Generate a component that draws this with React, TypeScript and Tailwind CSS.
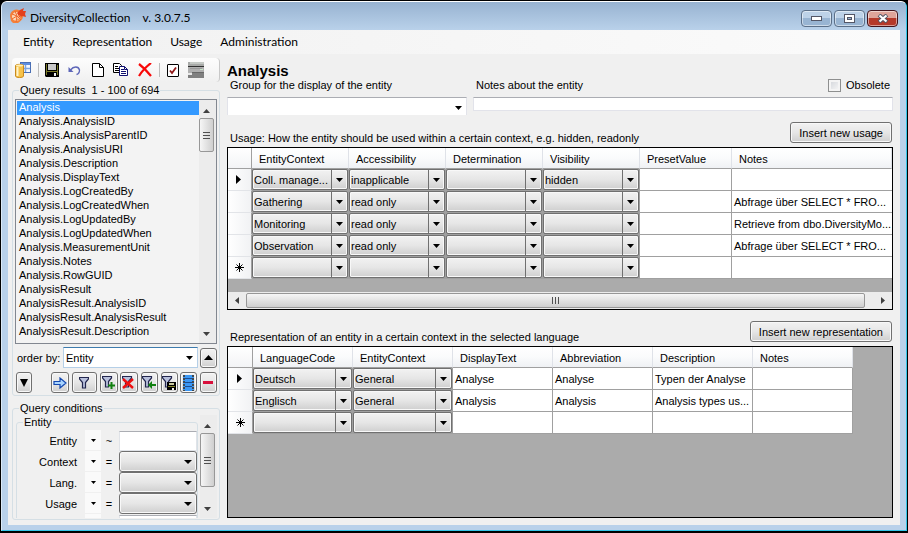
import type { ReactNode } from "react";

const ENTITIES = [
  "Analysis",
  "Analysis.AnalysisID",
  "Analysis.AnalysisParentID",
  "Analysis.AnalysisURI",
  "Analysis.Description",
  "Analysis.DisplayText",
  "Analysis.LogCreatedBy",
  "Analysis.LogCreatedWhen",
  "Analysis.LogUpdatedBy",
  "Analysis.LogUpdatedWhen",
  "Analysis.MeasurementUnit",
  "Analysis.Notes",
  "Analysis.RowGUID",
  "AnalysisResult",
  "AnalysisResult.AnalysisID",
  "AnalysisResult.AnalysisResult",
  "AnalysisResult.Description",
];

const USAGE_COLUMNS = ["EntityContext", "Accessibility", "Determination", "Visibility", "PresetValue", "Notes"];
const USAGE_ROWS = [
  ["Coll. manage...", "inapplicable", "", "hidden", "", ""],
  ["Gathering", "read only", "", "", "", "Abfrage über SELECT * FRO..."],
  ["Monitoring", "read only", "", "", "", "Retrieve from dbo.DiversityMo..."],
  ["Observation", "read only", "", "", "", "Abfrage über SELECT * FRO..."],
  ["", "", "", "", "", ""],
];

const REPRESENTATION_COLUMNS = ["LanguageCode", "EntityContext", "DisplayText", "Abbreviation", "Description", "Notes"];
const REPRESENTATION_ROWS = [
  ["Deutsch", "General", "Analyse", "Analyse", "Typen der Analyse", ""],
  ["Englisch", "General", "Analysis", "Analysis", "Analysis types us...", ""],
  ["", "", "", "", "", ""],
];

const CHROME = "border border-[#707070] bg-linear-to-b from-[#f2f2f2] via-[#e6e6e6] to-[#cfcfcf] shadow-[inset_0_0_0_1px_#f8f8f8]";

function Svg({ w = 16, h = 16, children }: { w?: number; h?: number; children: ReactNode }) {
  return (
    <svg width={w} height={h} viewBox={`0 0 ${w} ${h}`} aria-hidden="true" className="block shrink-0">
      {children}
    </svg>
  );
}

function Down() {
  return (
    <Svg w={7} h={4}>
      <path d="M0 0h7L3.5 4z" />
    </Svg>
  );
}

function AppLogo() {
  return (
    <Svg w={18} h={16}>
      <path d="M1 8a6.500 6.500 0 1 1 10 5.500L9 15H4l-2-2z" fill="#f4803a" />
      <path d="M3 9a4.500 4.500 0 0 1 9-1 4 4 0 0 1-4 4.500A4 4 0 0 1 3 9z" fill="#fbd9b8" />
      <path d="M8 8 3 6M8 8 6 3M8 8l-5 3M8 8l-1 6M8 8l4 4" stroke="#f0682c" strokeWidth="1" />
      <path d="M8 5l3-3 4-2-1 3h3l-1 3 1 3-4-1-2 2z" fill="#e3401c" />
      <path d="M9 8a2 2 0 0 1 3 1c0 2-3 3-4 2" fill="none" stroke="#f4803a" />
    </Svg>
  );
}

function DatabaseTableIcon() {
  return (
    <Svg>
      <rect x="5.500" y="0.500" width="10" height="10" fill="#f4f8ff" stroke="#4a6fb4" />
      <path d="M6 1h9v2H6z" fill="#5b8de0" />
      <path d="M6 6.500h9M10.500 3v7" stroke="#7ea4de" strokeWidth="1.500" />
      <path d="M0.500 3.500c0-1.500 8-1.500 8 0v10.500c0 2-8 2-8 0z" fill="#f6c24a" stroke="#c98a1c" />
      <ellipse cx="4.500" cy="3.500" rx="3.500" ry="1" fill="#fff0b8" />
      <path d="M2.500 5v9" stroke="#fff3c8" strokeWidth="2" />
    </Svg>
  );
}

function DisketteIcon() {
  return (
    <Svg w={14} h={14}>
      <path d="M0 0h14v14H1l-1-1z" />
      <path d="M1 1h1v11H1zM12 2h1v10h-1z" fill="#7b7b2a" />
      <path d="M3 1h8v6H3z" fill="#c9c9c9" />
      <path d="M1 8h12v1H1z" fill="#7b7b2a" />
      <path d="M9 10h2v3H9z" fill="#f0f0f0" />
    </Svg>
  );
}

function UndoIcon() {
  return (
    <Svg w={15} h={12}>
      <path d="M0.500 3v5h5z" fill="#5d66b8" />
      <path d="M2.500 6c3-4 8-4 9 0 0 2-1 4-3 4.500" fill="none" stroke="#5d66b8" strokeWidth="1.300" />
    </Svg>
  );
}

function PageIcon() {
  return (
    <Svg w={12} h={14}>
      <path d="M0.500 0.500h7l4 4v9h-11z" fill="#fff" stroke="#000" />
      <path d="M7.500 0.500v4h4" fill="none" stroke="#000" />
    </Svg>
  );
}

function CopyIcon() {
  return (
    <Svg w={16} h={14}>
      <path d="M0.500 0.500h6l2 2v7h-8z" fill="#fff" stroke="#000" />
      <path d="M2 3.500h3M2 5.500h4M2 7.500h4" stroke="#000" />
      <path d="M6.500 3.500h5l3 3v6h-8z" fill="#fff" stroke="#101070" />
      <path d="M8 6.500h3M8 8.500h5M8 10.500h5" stroke="#101070" />
      <path d="M11.500 3.500v3h3" fill="none" stroke="#101070" />
    </Svg>
  );
}

function DeleteIcon() {
  return (
    <Svg w={14} h={14}>
      <path d="M1 1c4 3 8 7 12 12M13 0C8 4 4 8 1 13" fill="none" stroke="#f80808" strokeWidth="2.200" />
    </Svg>
  );
}

function CheckIcon() {
  return (
    <Svg w={12} h={13}>
      <rect x="0.500" y="0.500" width="11" height="12" rx="0.500" fill="#fff" stroke="#000" />
      <path d="M3 6.500l2 2.500 4-5.500" fill="none" stroke="#901818" strokeWidth="1.800" />
    </Svg>
  );
}

function PrinterIcon() {
  return (
    <Svg w={16} h={16}>
      <path d="M0 0h16v5H0z" fill="#a8aaa8" />
      <path d="M2 0h14v2H2z" fill="#c4c8c4" />
      <path d="M0 4h16v1H0z" fill="#303030" />
      <path d="M0 5h16v6H0z" fill="#b0b0b0" />
      <path d="M2 6h12v1H2z" fill="#989898" />
      <path d="M0 11h16v5H0z" fill="#808080" />
      <path d="M0 11h4v2H0z" fill="#e8e8e8" />
      <path d="M4 10h12v1H4z" fill="#686868" />
      <path d="M12 7h3v1h-3z" fill="#c4e4c8" />
    </Svg>
  );
}

function FunnelIcon({ mark }: { mark?: "plus" | "cross" | "back" | "save" }) {
  return (
    <Svg w={mark ? 14 : 10} h={14}>
      <g transform={mark ? "translate(0 0)" : "translate(0 1)"}>
        <path d="M0.500 0.500h9v1.500l-3 3.500v5.500h-3v-5.500l-3-3.500z" fill="#b8c0dc" stroke="#22264e" strokeWidth="1.200" />
      </g>
      {mark === "plus" && <path d="M6 9.500h7M9.500 6v7" stroke="#108010" strokeWidth="2" />}
      {mark === "cross" && <path d="M1 3l10 9M11 3L1 12" stroke="#ee1010" strokeWidth="2.400" />}
      {mark === "back" && (
        <>
          <path d="M6 9l4-4v8z" fill="#108010" />
          <path d="M9 9h5" stroke="#108010" strokeWidth="2" />
        </>
      )}
      {mark === "save" && (
        <>
          <path d="M5 6h9v8H5z" />
          <path d="M7 7h5v2H7z" fill="#c9c9a0" />
          <path d="M6 10h7v1H6z" fill="#84842a" />
          <path d="M10 12h2v2h-2z" fill="#f0f0f0" />
        </>
      )}
    </Svg>
  );
}

function ArrowIcon() {
  return (
    <Svg w={14} h={12}>
      <path d="M1 4.500h6V1l6 5-6 5V7.500H1z" fill="#a8d4ff" stroke="#1448b0" strokeWidth="1.200" />
    </Svg>
  );
}

function FilmIcon() {
  return (
    <Svg w={11} h={16}>
      <path d="M0 0h11v16H0z" fill="#3c98f4" />
      <path d="M1 0v16M10 0v16" stroke="#404850" strokeWidth="2" strokeDasharray="2 1" />
      <path d="M2 3.500h7M2 7.500h7M2 11.500h7" stroke="#1c4c90" />
    </Svg>
  );
}

function CaptionButton({ label, red, children }: { label: string; red?: boolean; children: ReactNode }) {
  return (
    <button
      type="button"
      aria-label={label}
      className={`flex h-[17px] w-[31px] items-center justify-center rounded-sm border shadow-[inset_0_0_0_1px_rgba(255,255,255,0.5)] ${
        red
          ? "border-[#43141c] bg-linear-to-b from-[#dfa49a] from-45% to-[#b5392a] to-50%"
          : "border-[#5b6f88] bg-linear-to-b from-[#bdd2e8] from-45% to-[#98b4d2] to-50%"
      }`}
    >
      {children}
    </button>
  );
}

function PushButton({ children, width = "px-2", height = "h-[21px]", label }: { children: ReactNode; width?: string; height?: string; label?: string }) {
  return (
    <button
      type="button"
      aria-label={label}
      className={`flex shrink-0 items-center justify-center rounded-[3px] whitespace-nowrap ${height} ${width} ${CHROME}`}
    >
      {children}
    </button>
  );
}

function Separator() {
  return <span className="h-[14px] w-px bg-[#bdbdbd]" />;
}

function VerticalScrollbar({ thumb, className }: { thumb: string; className: string }) {
  return (
    <div aria-hidden="true" className={`flex w-[17px] shrink-0 flex-col bg-[#ececec] ${className}`}>
      <span className="flex h-[18px] w-[15px] shrink-0 items-center justify-center pt-1">
        <Svg w={7} h={4}>
          <path d="M0 4h7L3.500 0z" fill="#404040" />
        </Svg>
      </span>
      <span
        className={`flex w-[15px] shrink-0 flex-col items-center justify-center gap-0.5 rounded-xs border border-[#979797] bg-linear-to-r from-[#f6f6f6] to-[#cfcfcf] ${thumb}`}
      >
        <span className="h-px w-[7px] bg-[#505050]" />
        <span className="h-px w-[7px] bg-[#505050]" />
        <span className="h-px w-[7px] bg-[#505050]" />
      </span>
      <span className="mt-auto flex h-[18px] w-[15px] items-center justify-center pb-px">
        <Svg w={7} h={4}>
          <path d="M0 0h7L3.500 4z" fill="#404040" />
        </Svg>
      </span>
    </div>
  );
}

function HorizontalScrollbar() {
  return (
    <div aria-hidden="true" className="flex h-[17px] items-center bg-[#ececec]">
      <span className="flex w-[18px] justify-center">
        <Svg w={4} h={7}>
          <path d="M4 0v7L0 3.500z" fill="#404040" />
        </Svg>
      </span>
      <span className="flex h-[15px] flex-1 items-center justify-center gap-0.5 rounded-xs border border-[#979797] bg-linear-to-b from-[#f6f6f6] to-[#cfcfcf]">
        <span className="h-[7px] w-px bg-[#505050]" />
        <span className="h-[7px] w-px bg-[#505050]" />
        <span className="h-[7px] w-px bg-[#505050]" />
      </span>
      <span className="flex w-[27px] justify-center pl-2">
        <Svg w={4} h={7}>
          <path d="M0 0v7l4-3.500z" fill="#404040" />
        </Svg>
      </span>
    </div>
  );
}

function CellSelect({ value, label }: { value: string; label: string }) {
  return (
    <div className="relative h-[21px] w-full">
      <select aria-label={label} className={`block h-[21px] w-full appearance-none rounded-xs pr-4 pl-px ${CHROME}`}>
        <option>{value}</option>
      </select>
      <span className="pointer-events-none absolute top-px right-px bottom-px flex w-4 items-center justify-center border-l border-[#707070]">
        <Down />
      </span>
    </div>
  );
}

function RowMarker({ kind }: { kind: "current" | "new" | "none" }) {
  if (kind === "none") return null;
  return (
    <span className="flex justify-center">
      {kind === "current" ? (
        <Svg w={9} h={9}>
          <path d="M1 0l5 4.500L1 9z" />
        </Svg>
      ) : (
        <Svg w={9} h={9}>
          <path d="M4.500 0v9M0 4.500h9M1.500 1.500l6 6M7.500 1.500l-6 6" stroke="#000" />
        </Svg>
      )}
    </span>
  );
}

function DataGrid({
  caption,
  columns,
  rows,
  selects,
  widths,
  marker,
  tableWidth,
  lastEdge,
}: {
  caption: string;
  columns: string[];
  rows: string[][];
  selects: number;
  widths: string[];
  marker: string;
  tableWidth: string;
  lastEdge: string;
}) {
  return (
    <table aria-label={caption} className={`table-fixed border-separate border-spacing-0 bg-white ${tableWidth}`}>
      <colgroup>
        <col className={marker} />
        {columns.map((c, i) => (
          <col key={c} className={widths[i]} />
        ))}
      </colgroup>
      <thead>
        <tr className="h-[21px]">
          <td className="border-r border-b border-[#a0a0a0] bg-linear-to-b from-white to-[#f3f4f6] p-0" />
          {columns.map((c) => (
            <th
              key={c}
              scope="col"
              className="border-r border-b border-r-[#dfe2e8] border-b-[#a0a0a0] bg-linear-to-b from-white via-[#fafbfc] to-[#eff1f4] p-0 pt-px pl-[7px] text-left font-normal"
            >
              {c}
            </th>
          ))}
        </tr>
      </thead>
      <tbody>
        {rows.map((row, r) => (
          <tr key={r} className="h-[22px]">
            <td className="border-r border-b border-r-[#a0a0a0] border-b-[#e2e4e8] bg-linear-to-r from-white to-[#f1f2f4] p-0">
              <RowMarker kind={r === 0 ? "current" : r === rows.length - 1 ? "new" : "none"} />
            </td>
            {row.map((value, c) => (
              <td
                key={c}
                className={`overflow-hidden border-b border-[#a0a0a0] p-0 whitespace-nowrap ${c < selects ? "bg-[#a0a0a0]" : "pl-0.5"} ${
                  c === row.length - 1 ? lastEdge : "border-r"
                }`}
              >
                {c < selects ? <CellSelect value={value} label={`${columns[c]} ${r + 1}`} /> : value}
              </td>
            ))}
          </tr>
        ))}
      </tbody>
    </table>
  );
}

function ConditionRow({ label, operator, text }: { label: string; operator: string; text?: boolean }) {
  const id = `condition-${label}`;
  return (
    <div className="flex h-[21px] items-center">
      <label htmlFor={id} className="w-[60px] text-right">
        {label}
      </label>
      <button type="button" aria-label={`${label} operator`} className="ml-2 flex h-[21px] w-4 items-center justify-center border-b border-[#f0f0f0] bg-[#fafafa]">
        <Svg w={5} h={3}>
          <path d="M0 0h5L2.500 3z" />
        </Svg>
      </button>
      <span className="w-4 text-center">{operator}</span>
      {text ? (
        <input id={id} className="ml-0.5 h-5 min-w-0 flex-1 border border-[#e0e3e8] border-t-[#abadb3] bg-white" />
      ) : (
        <span className="relative ml-0.5 flex h-[21px] min-w-0 flex-1 items-center">
          <select id={id} className={`h-[21px] w-full appearance-none rounded-[3px] ${CHROME}`} />
          <span className="pointer-events-none absolute right-[5px]">
            <Svg w={8} h={4}>
              <path d="M0 0h8L4 4z" />
            </Svg>
          </span>
        </span>
      )}
    </div>
  );
}

function SectionHead({ title, action }: { title: string; action: string }) {
  return (
    <div className="flex h-[25px] items-start justify-between">
      <h2 className="self-end pb-0.5 pl-[3px]">{title}</h2>
      <div className="pr-px">
        <PushButton>{action}</PushButton>
      </div>
    </div>
  );
}

export default function App() {
  return (
    <div className="h-screen bg-black px-px pt-px pb-0.5 font-['Liberation_Sans',Arial,sans-serif] text-[11px] leading-[14px] text-black">
      <div className="flex h-full flex-col rounded-t-md border border-t-white border-r-[#35c5e8] border-b-[#35c5e8] border-l-[#dceaf7] bg-[#b9d1ea] px-1.5 pb-[5px]">
        <header className="-mx-1.5 flex h-7 shrink-0 items-center rounded-t-[5px] bg-linear-to-b from-[#98b3d1] to-[#b9d1ea] pr-2 pl-[7px] font-[Lato,'Open_Sans',sans-serif] text-[12px]">
          <AppLogo />
          <h1 className="ml-[3px] pt-1 whitespace-pre">DiversityCollection{"    "}v. 3.0.7.5</h1>
          <div className="ml-auto flex gap-0.5 pt-1">
            <CaptionButton label="Minimize">
              <Svg w={11} h={5}>
                <rect x="0.500" y="0.500" width="10" height="4" fill="#fff" stroke="#535666" />
              </Svg>
            </CaptionButton>
            <CaptionButton label="Maximize">
              <Svg w={11} h={9}>
                <rect x="0.500" y="0.500" width="10" height="8" fill="#fff" stroke="#535666" />
                <rect x="3.500" y="3.500" width="4" height="2" fill="#98b4d2" stroke="#535666" />
              </Svg>
            </CaptionButton>
            <CaptionButton label="Close" red>
              <Svg w={12} h={9}>
                <path d="M2 1l8 7M10 1L2 8" stroke="#535666" strokeWidth="4" />
                <path d="M2.500 1.500l7 6M9.500 1.500l-7 6" stroke="#fff" strokeWidth="2.200" />
              </Svg>
            </CaptionButton>
          </div>
        </header>

        <nav className="flex h-6 shrink-0 items-center gap-[18px] bg-linear-to-r from-[#f1f1f1] to-[#fbfbfb] pl-[15px] font-[Lato,'Open_Sans',sans-serif] text-[12px]">
          <button type="button">Entity</button>
          <button type="button">Representation</button>
          <button type="button">Usage</button>
          <button type="button">Administration</button>
        </nav>

        <div className="flex min-h-0 flex-1 bg-[#f0f0f0]">
          <aside className="flex w-[212px] shrink-0 flex-col pt-1 pb-[5px] pl-1">
            <div className="flex h-6 shrink-0 items-center rounded-sm border-r border-[#c8c8c8] bg-linear-to-b from-[#fdfdfd] to-[#f0f0f0] pl-[3px]">
              <button type="button" aria-label="Table editor"><DatabaseTableIcon /></button>
              <span className="mr-1.5 ml-[7px] flex"><Separator /></span>
              <div className="flex items-center gap-[9px]">
                <button type="button" aria-label="Save"><DisketteIcon /></button>
                <button type="button" aria-label="Undo"><UndoIcon /></button>
                <button type="button" aria-label="New"><PageIcon /></button>
                <button type="button" aria-label="Copy"><CopyIcon /></button>
                <button type="button" aria-label="Delete"><DeleteIcon /></button>
              </div>
              <span className="mr-[7px] ml-[7px] flex"><Separator /></span>
              <div className="flex items-center gap-[9px]">
                <button type="button" aria-label="Select"><CheckIcon /></button>
                <button type="button" aria-label="Print"><PrinterIcon /></button>
              </div>
            </div>

            <fieldset className="mt-px min-w-0 shrink-0 rounded-[3px] border border-[#d5dfe5] px-0.5 pt-0.5 pb-px">
              <legend className="ml-1 px-px whitespace-pre">Query results{"  "}1 - 100 of 694</legend>
              <div className="flex border border-[#828790] bg-[#f3f3f3]">
                <select
                  size={17}
                  aria-label="Query results"
                  defaultValue="Analysis"
                  className="min-w-0 flex-1 overflow-hidden py-px pl-px [scrollbar-width:none]"
                >
                  {ENTITIES.map((e) => (
                    <option
                      key={e}
                      className="h-[14px] min-h-0 p-0 pl-0.5 leading-4 checked:bg-[linear-gradient(#3399ff,#3399ff)] checked:[-webkit-text-fill-color:white]"
                    >
                      {e}
                    </option>
                  ))}
                </select>
                <VerticalScrollbar thumb="h-[34px]" className="h-[243px]" />
              </div>
              <div className="mt-[3px] flex h-[21px] items-center">
                <label htmlFor="order" className="w-[48px] pl-0.5 whitespace-nowrap">order by:</label>
                <span className="relative flex flex-1 items-center">
                  <select id="order" className="h-[21px] w-full appearance-none border border-[#b5cfe7] border-t-[#3d7bad] bg-white pl-0.5">
                    <option>Entity</option>
                  </select>
                  <span className="pointer-events-none absolute right-[5px]"><Down /></span>
                </span>
                <span className="ml-0.5">
                  <PushButton width="w-[17px]" height="h-5" label="Ascending">
                    <Svg w={9} h={5}><path d="M0 5h9L4.500 0z" /></Svg>
                  </PushButton>
                </span>
              </div>
              <div className="mt-1 flex h-[22px] justify-between pl-px">
                <PushButton width="w-4" label="Show conditions"><Svg w={8} h={8}><path d="M0 0h8L4 8z" /></Svg></PushButton>
                <span className="w-3.5" />
                <PushButton width="w-[18px]" label="Next"><ArrowIcon /></PushButton>
                <PushButton width="w-[25px]" label="Query"><FunnelIcon /></PushButton>
                <PushButton width="w-[18px]" label="Add to query"><FunnelIcon mark="plus" /></PushButton>
                <PushButton width="w-[18px]" label="Clear query"><FunnelIcon mark="cross" /></PushButton>
                <PushButton width="w-[17px]" label="Previous query"><FunnelIcon mark="back" /></PushButton>
                <PushButton width="w-[17px]" label="Save query"><FunnelIcon mark="save" /></PushButton>
                <PushButton width="w-[17px]" label="Columns"><FilmIcon /></PushButton>
                <PushButton width="w-[17px]" label="Remove"><Svg w={10} h={3}><path d="M0 0h10v3H0z" fill="#d8103c" /></Svg></PushButton>
              </div>
            </fieldset>

            <fieldset className="mt-[5px] flex min-h-0 min-w-0 flex-1 flex-col rounded-[3px] border border-[#d5dfe5] pr-0.5 pb-px pl-[3px]">
              <legend className="ml-[3px] px-px">Query conditions</legend>
              <div className="flex min-h-0 flex-1 overflow-hidden">
                <div className="min-w-0 flex-1 overflow-hidden">
                  <fieldset className="min-w-0 rounded-[3px] border border-[#d5dfe5] pt-px">
                    <legend className="ml-[6px] px-px">Entity</legend>
                    <ConditionRow label="Entity" operator="~" text />
                    <ConditionRow label="Context" operator="=" />
                    <ConditionRow label="Lang." operator="=" />
                    <ConditionRow label="Usage" operator="=" />
                    <ConditionRow label="" operator="" text />
                  </fieldset>
                </div>
                <VerticalScrollbar thumb="h-[54px]" className="ml-0.5" />
              </div>
            </fieldset>
          </aside>

          <main className="flex min-w-0 flex-1 flex-col pt-2 pr-[7px] pb-[7px] pl-[7px]">
            <h2 className="h-4 text-[15px] leading-[18px] font-bold">Analysis</h2>
            <div className="flex gap-1.5">
              <div className="flex w-[240px] flex-col gap-[5px]">
                <label htmlFor="group" className="pl-[3px]">Group for the display of the entity</label>
                <span className="relative flex items-center">
                  <select id="group" className="h-[18px] w-full appearance-none border border-b-0 border-[#e2e3ea] border-t-[#abadb3] bg-white" />
                  <span className="pointer-events-none absolute right-[5px] pt-1"><Down /></span>
                </span>
              </div>
              <div className="flex flex-1 flex-col gap-[5px]">
                <div className="flex justify-between">
                  <label htmlFor="notes" className="pl-[3px]">Notes about the entity</label>
                  <label className="flex items-center gap-[5px] pr-[3px]">
                    <input
                      type="checkbox"
                      className="size-[13px] appearance-none border border-[#8e8f8f] bg-linear-to-br from-[#d0d3d8] to-[#fafafa] shadow-[inset_0_0_0_2px_#f4f4f4]"
                    />
                    Obsolete
                  </label>
                </div>
                <input id="notes" className="h-[14px] w-full border border-[#e2e3ea] border-t-[#abadb3] bg-white" />
              </div>
            </div>

            <section className="mt-[7px]">
              <SectionHead title="Usage: How the entity should be used within a certain context, e.g. hidden, readonly" action="Insert new usage" />
              <div className="overflow-hidden border border-black bg-[#ababab]">
                <DataGrid
                  caption="Usage"
                  columns={USAGE_COLUMNS}
                  rows={USAGE_ROWS}
                  selects={4}
                  marker="w-6"
                  widths={["w-[97px]", "w-[97px]", "w-[97px]", "w-[97px]", "w-[92px]", "w-auto"]}
                  tableWidth="w-full"
                  lastEdge=""
                />
                <div className="h-[13px]" />
                <HorizontalScrollbar />
              </div>
            </section>

            <section className="mt-[11px] flex min-h-0 flex-1 flex-col">
              <SectionHead title="Representation of an entity in a certain context in the selected language" action="Insert new representation" />
              <div className="min-h-0 flex-1 overflow-hidden border border-black bg-[#ababab]">
                <DataGrid
                  caption="Representation"
                  columns={REPRESENTATION_COLUMNS}
                  rows={REPRESENTATION_ROWS}
                  selects={2}
                  marker="w-[25px]"
                  widths={["w-[100px]", "w-[100px]", "w-[100px]", "w-[100px]", "w-[100px]", "w-[100px]"]}
                  tableWidth="w-[625px]"
                  lastEdge="border-r"
                />
              </div>
            </section>
          </main>
        </div>
      </div>
    </div>
  );
}
